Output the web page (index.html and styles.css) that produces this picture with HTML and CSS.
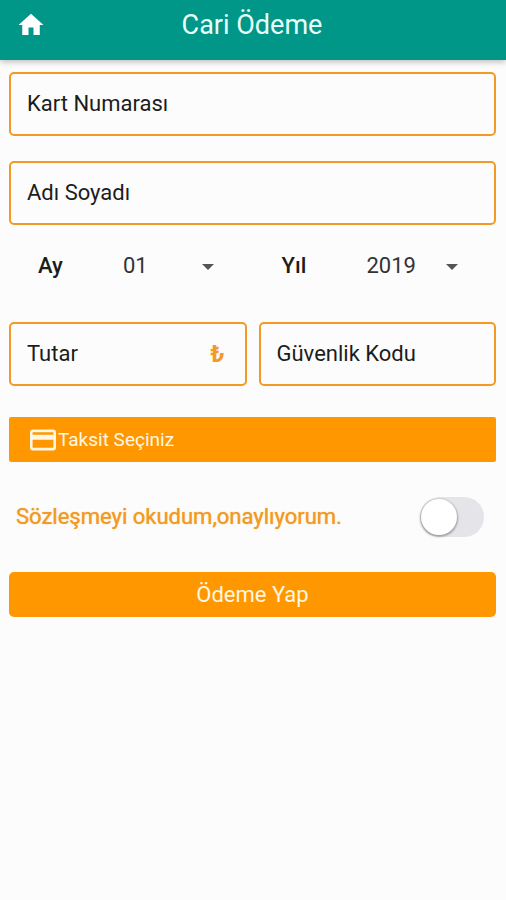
FILE: index.html
```html
<!DOCTYPE html>
<html lang="tr">
<head>
  <meta charset="utf-8">
  <meta name="viewport" content="width=device-width, initial-scale=1">
  <title>Cari Ödeme</title>
  <link rel="stylesheet" href="styles.css">
</head>
<body>
  <header class="app-bar">
    <a class="home-link" href="#" aria-label="Ana sayfa">
      <svg class="home-icon" viewBox="0 0 24 24" aria-hidden="true"><path d="M10 20v-6h4v6h5v-8h3L12 3 2 12h3v8z"/></svg>
    </a>
    <h1 class="app-title">Cari Ödeme</h1>
  </header>

  <form class="payment">
    <div class="field">
      <input class="field-input" type="text" inputmode="numeric" placeholder="Kart Numarası" aria-label="Kart Numarası">
    </div>
    <div class="field">
      <input class="field-input" type="text" placeholder="Adı Soyadı" aria-label="Adı Soyadı">
    </div>

    <div class="expiry">
      <div class="picker">
        <label class="picker-label" for="month">Ay</label>
        <div class="picker-box">
          <select class="picker-select" id="month"><option>01</option></select>
          <svg class="picker-arrow" viewBox="0 0 12 6" aria-hidden="true"><path d="M0 0h12L6 6z"/></svg>
        </div>
      </div>
      <div class="picker">
        <label class="picker-label" for="year">Yıl</label>
        <div class="picker-box">
          <select class="picker-select" id="year"><option>2019</option></select>
          <svg class="picker-arrow" viewBox="0 0 12 6" aria-hidden="true"><path d="M0 0h12L6 6z"/></svg>
        </div>
      </div>
    </div>

    <div class="field-pair">
      <div class="field">
        <input class="field-input" type="text" inputmode="decimal" placeholder="Tutar" aria-label="Tutar">
        <span class="currency">₺</span>
      </div>
      <div class="field">
        <input class="field-input" type="text" inputmode="numeric" placeholder="Güvenlik Kodu" aria-label="Güvenlik Kodu">
      </div>
    </div>

    <button class="button button-installment" type="button">
      <svg class="card-icon" viewBox="0 0 26 22" aria-hidden="true"><path fill-rule="evenodd" d="M3 0.500h20a3 3 0 0 1 3 3v15a3 3 0 0 1-3 3H3a3 3 0 0 1-3-3v-15a3 3 0 0 1 3-3zM2.600 3.200v2.600h20.800V3.200zM2.600 10.800v8h20.800v-8z"/></svg>
      Taksit Seçiniz
    </button>

    <div class="consent">
      <label class="consent-label" for="consent">Sözleşmeyi okudum,onaylıyorum.</label>
      <input class="switch" id="consent" type="checkbox" role="switch">
    </div>

    <button class="button button-pay" type="submit">Ödeme Yap</button>
  </form>
</body>
</html>
```
FILE: styles.css
```css
* {
  box-sizing: border-box;
}

body {
  margin: 0;
  background: #fcfcfc;
  color: #1c1c1c;
  font-family: Roboto, "Liberation Sans", sans-serif;
  font-size: 22px;
  line-height: 28px;
}

input,
select,
button {
  margin: 0;
  font: inherit;
}

.app-bar {
  display: grid;
  grid-template-columns: 46px 1fr 48px;
  align-items: center;
  padding: 7px 8px 17px;
  background: #009688;
  color: #e9fffb;
  box-shadow: 0 2px 6px rgba(0, 0, 0, 0.25);
}

.home-link {
  display: flex;
  justify-content: center;
}

.home-icon {
  width: 30px;
  height: 30px;
  fill: #fff;
}

.app-title {
  margin: 0;
  font-size: 27px;
  line-height: 36px;
  font-weight: 400;
  text-align: center;
}

.payment {
  display: flex;
  flex-direction: column;
  padding: 12px 10px 12px 9px;
}

.field {
  display: flex;
  align-items: center;
  min-width: 0;
  height: 64px;
  margin-bottom: 25px;
  padding: 0 20px 0 16px;
  border: 2px solid #f39a26;
  border-radius: 5px;
}

.field-input {
  flex: 1;
  min-width: 0;
  padding: 0;
  border: 0;
  outline: 0;
  background: transparent;
  color: inherit;
}

.field-input::placeholder {
  color: #1c1c1c;
  opacity: 1;
}

.currency {
  color: #f39a26;
  font-size: 24px;
  font-weight: 700;
}

.expiry {
  display: grid;
  grid-template-columns: 1fr 1fr;
  margin-bottom: 40px;
}

.picker {
  display: flex;
  align-items: center;
  height: 32px;
  padding-left: 29px;
}

.picker-label {
  width: 85px;
  font-weight: 500;
}

.picker-box {
  position: relative;
  width: 91px;
}

.picker-select {
  width: 100%;
  padding: 0;
  border: 0;
  appearance: none;
  background: transparent;
  color: #333;
}

.picker-arrow {
  position: absolute;
  top: 50%;
  right: 0;
  width: 12px;
  height: 6px;
  margin-top: -2px;
  fill: #555;
  pointer-events: none;
}

.field-pair {
  display: grid;
  grid-template-columns: 1fr 1fr;
  gap: 12px;
  margin-bottom: 6px;
}

.button {
  display: flex;
  align-items: center;
  height: 45px;
  padding: 0 21px;
  border: 0;
  background: #ff9800;
  color: #fff6e3;
}

.button-installment {
  gap: 2px;
  border-radius: 2px;
  font-size: 19px;
}

.card-icon {
  width: 26px;
  height: 22px;
  fill: currentColor;
}

.button-pay {
  justify-content: center;
  border-radius: 5px;
}

.consent {
  display: flex;
  align-items: center;
  justify-content: space-between;
  padding: 35px 12px 35px 7px;
}

.consent-label {
  color: #f39a26;
  text-shadow: 0 0 1px #f39a26;
}

.switch {
  display: flex;
  align-items: center;
  width: 64px;
  height: 40px;
  padding: 1px;
  appearance: none;
  border-radius: 20px;
  background: #e5e5e9;
}

.switch::before {
  content: "";
  width: 36px;
  height: 36px;
  border-radius: 50%;
  background: #fff;
  box-shadow: 0 1px 2px 1px rgba(0, 0, 0, 0.3);
}

.switch:checked {
  justify-content: flex-end;
  background: #ff9800;
}
```
